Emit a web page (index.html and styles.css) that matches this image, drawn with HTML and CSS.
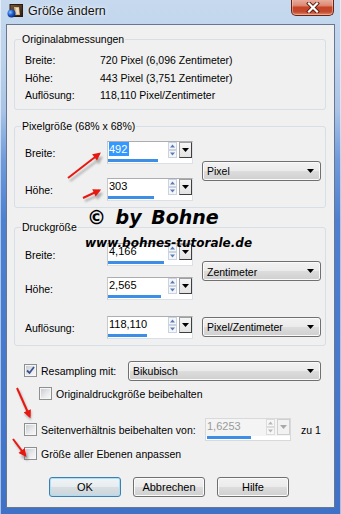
FILE: index.html
```html
<!DOCTYPE html>
<html lang="de">
<head>
<meta charset="utf-8">
<title>Größe ändern</title>
<link rel="stylesheet" href="styles.css">
</head>
<body>
<div class="window">
  <div class="titlebar">
    <svg class="app-icon" width="16" height="14" viewBox="0 0 16 14">
      <defs>
        <linearGradient id="ig" x1="0" y1="0" x2="1" y2="1">
          <stop offset="0" stop-color="#7a5a3c"/>
          <stop offset="1" stop-color="#2b1c12"/>
        </linearGradient>
        <radialGradient id="ball" cx="0.35" cy="0.35" r="0.7">
          <stop offset="0" stop-color="#8fc0ff"/>
          <stop offset="0.5" stop-color="#1f5fd0"/>
          <stop offset="1" stop-color="#0a2a70"/>
        </radialGradient>
      </defs>
      <rect x="3" y="0.5" width="12.5" height="12" fill="url(#ig)" stroke="#2a1a10" stroke-width="1"/>
      <path d="M7 3 L12 3 L13 11 L8 11 Z" fill="#d9b88a"/>
      <path d="M9 4 L11.5 4 L12 10 L9.5 10 Z" fill="#f1dfc0"/>
      <circle cx="4.5" cy="9.5" r="4" fill="url(#ball)"/>
    </svg>
    <span class="title">Größe ändern</span>
    <button class="close" type="button" aria-label="Schließen">
      <svg width="14" height="11" viewBox="0 0 14 11">
        <path d="M3 1.5 L11 9.5 M11 1.5 L3 9.5" stroke="#5a1a0e" stroke-width="4" stroke-linecap="square"/>
        <path d="M3 1.5 L11 9.5 M11 1.5 L3 9.5" stroke="#ffffff" stroke-width="2.2" stroke-linecap="square"/>
      </svg>
    </button>
  </div>

  <div class="client">
    <fieldset class="group g1">
      <legend>Originalabmessungen</legend>
      <div class="info-row"><span class="info-lbl">Breite:</span><span>720 Pixel (6,096 Zentimeter)</span></div>
      <div class="info-row"><span class="info-lbl">Höhe:</span><span>443 Pixel (3,751 Zentimeter)</span></div>
      <div class="info-row"><span class="info-lbl">Auflösung:</span><span>118,110 Pixel/Zentimeter</span></div>
    </fieldset>

    <fieldset class="group g2">
      <legend>Pixelgröße (68% x 68%)</legend>
      <div class="form-grid grid-px">
        <span class="lbl row-a">Breite:</span>
        <div class="spin row-a">
          <div class="spin-top">
            <span class="spin-val"><span class="sel">492</span></span>
            <span class="spin-arrows"><svg width="9" height="16" viewBox="0 0 9 16"><rect x="0.5" y="0.5" width="8" height="7" fill="#f4f6fa" stroke="#c9d3e2"/><path d="M2 5.5 L4.5 2.5 L7 5.5 Z" fill="#5c7cb4"/><rect x="0.5" y="8.5" width="8" height="7" fill="#f4f6fa" stroke="#c9d3e2"/><path d="M2 10.5 L4.5 13.5 L7 10.5 Z" fill="#5c7cb4"/></svg></span>
            <span class="spin-drop"><svg width="7" height="4" viewBox="0 0 7 4"><path d="M0 0 L7 0 L3.5 4 Z" fill="#000"/></svg></span>
          </div>
          <div class="spin-bar"><div class="spin-fill" style="width:50px"></div></div>
        </div>
        <div class="select row-ab"><span>Pixel</span><svg width="7" height="4" viewBox="0 0 7 4"><path d="M0 0 L7 0 L3.5 4 Z" fill="#000"/></svg></div>
        <span class="lbl row-b">Höhe:</span>
        <div class="spin row-b">
          <div class="spin-top">
            <span class="spin-val">303</span>
            <span class="spin-arrows"><svg width="9" height="16" viewBox="0 0 9 16"><rect x="0.5" y="0.5" width="8" height="7" fill="#f4f6fa" stroke="#c9d3e2"/><path d="M2 5.5 L4.5 2.5 L7 5.5 Z" fill="#5c7cb4"/><rect x="0.5" y="8.5" width="8" height="7" fill="#f4f6fa" stroke="#c9d3e2"/><path d="M2 10.5 L4.5 13.5 L7 10.5 Z" fill="#5c7cb4"/></svg></span>
            <span class="spin-drop"><svg width="7" height="4" viewBox="0 0 7 4"><path d="M0 0 L7 0 L3.5 4 Z" fill="#000"/></svg></span>
          </div>
          <div class="spin-bar"><div class="spin-fill" style="width:46px"></div></div>
        </div>
      </div>
    </fieldset>

    <fieldset class="group g3">
      <legend>Druckgröße</legend>
      <div class="form-grid grid-print">
        <span class="lbl row-a">Breite:</span>
        <div class="spin row-a">
          <div class="spin-top">
            <span class="spin-val">4,166</span>
            <span class="spin-arrows"><svg width="9" height="16" viewBox="0 0 9 16"><rect x="0.5" y="0.5" width="8" height="7" fill="#f4f6fa" stroke="#c9d3e2"/><path d="M2 5.5 L4.5 2.5 L7 5.5 Z" fill="#5c7cb4"/><rect x="0.5" y="8.5" width="8" height="7" fill="#f4f6fa" stroke="#c9d3e2"/><path d="M2 10.5 L4.5 13.5 L7 10.5 Z" fill="#5c7cb4"/></svg></span>
            <span class="spin-drop"><svg width="7" height="4" viewBox="0 0 7 4"><path d="M0 0 L7 0 L3.5 4 Z" fill="#000"/></svg></span>
          </div>
          <div class="spin-bar"><div class="spin-fill" style="width:56px"></div></div>
        </div>
        <div class="select row-ab"><span>Zentimeter</span><svg width="7" height="4" viewBox="0 0 7 4"><path d="M0 0 L7 0 L3.5 4 Z" fill="#000"/></svg></div>
        <span class="lbl row-b">Höhe:</span>
        <div class="spin row-b">
          <div class="spin-top">
            <span class="spin-val">2,565</span>
            <span class="spin-arrows"><svg width="9" height="16" viewBox="0 0 9 16"><rect x="0.5" y="0.5" width="8" height="7" fill="#f4f6fa" stroke="#c9d3e2"/><path d="M2 5.5 L4.5 2.5 L7 5.5 Z" fill="#5c7cb4"/><rect x="0.5" y="8.5" width="8" height="7" fill="#f4f6fa" stroke="#c9d3e2"/><path d="M2 10.5 L4.5 13.5 L7 10.5 Z" fill="#5c7cb4"/></svg></span>
            <span class="spin-drop"><svg width="7" height="4" viewBox="0 0 7 4"><path d="M0 0 L7 0 L3.5 4 Z" fill="#000"/></svg></span>
          </div>
          <div class="spin-bar"><div class="spin-fill" style="width:53px"></div></div>
        </div>
        <span class="lbl row-c">Auflösung:</span>
        <div class="spin row-c">
          <div class="spin-top">
            <span class="spin-val">118,110</span>
            <span class="spin-arrows"><svg width="9" height="16" viewBox="0 0 9 16"><rect x="0.5" y="0.5" width="8" height="7" fill="#f4f6fa" stroke="#c9d3e2"/><path d="M2 5.5 L4.5 2.5 L7 5.5 Z" fill="#5c7cb4"/><rect x="0.5" y="8.5" width="8" height="7" fill="#f4f6fa" stroke="#c9d3e2"/><path d="M2 10.5 L4.5 13.5 L7 10.5 Z" fill="#5c7cb4"/></svg></span>
            <span class="spin-drop"><svg width="7" height="4" viewBox="0 0 7 4"><path d="M0 0 L7 0 L3.5 4 Z" fill="#000"/></svg></span>
          </div>
          <div class="spin-bar"><div class="spin-fill" style="width:39px"></div></div>
        </div>
        <div class="select row-c"><span>Pixel/Zentimeter</span><svg width="7" height="4" viewBox="0 0 7 4"><path d="M0 0 L7 0 L3.5 4 Z" fill="#000"/></svg></div>
      </div>
    </fieldset>

    <div class="options">
      <div class="opt opt-resample">
        <span class="cb checked"><svg width="9" height="9" viewBox="0 0 9 9"><path d="M1 4.5 L3.5 7 L8 1" fill="none" stroke="#3b5390" stroke-width="1.8"/></svg></span>
        <span class="opt-lbl w-resample">Resampling mit:</span>
        <div class="select sel-wide"><span>Bikubisch</span><svg width="7" height="4" viewBox="0 0 7 4"><path d="M0 0 L7 0 L3.5 4 Z" fill="#000"/></svg></div>
      </div>
      <div class="opt opt-indent">
        <span class="cb"></span>
        <span class="opt-lbl">Originaldruckgröße beibehalten</span>
      </div>
      <div class="opt opt-ratio">
        <span class="cb"></span>
        <span class="opt-lbl w-ratio">Seitenverhältnis beibehalten von:</span>
        <div class="spin disabled">
          <div class="spin-top">
            <span class="spin-val">1,6253</span>
            <span class="spin-arrows"><svg width="9" height="16" viewBox="0 0 9 16"><rect x="0.5" y="0.5" width="8" height="7" fill="#f7f7f7" stroke="#dcdcdc"/><path d="M2 5.5 L4.5 2.5 L7 5.5 Z" fill="#b8b8b8"/><rect x="0.5" y="8.5" width="8" height="7" fill="#f7f7f7" stroke="#dcdcdc"/><path d="M2 10.5 L4.5 13.5 L7 10.5 Z" fill="#b8b8b8"/></svg></span>
            <span class="spin-drop"><svg width="7" height="4" viewBox="0 0 7 4"><path d="M0 0 L7 0 L3.5 4 Z" fill="#a8a8a8"/></svg></span>
          </div>
          <div class="spin-bar"><div class="spin-fill" style="width:44px"></div></div>
        </div>
        <span class="zu">zu 1</span>
      </div>
      <div class="opt opt-layers">
        <span class="cb"></span>
        <span class="opt-lbl">Größe aller Ebenen anpassen</span>
      </div>
    </div>

    <div class="buttons">
      <button class="btn default" type="button">OK</button>
      <button class="btn" type="button">Abbrechen</button>
      <button class="btn" type="button">Hilfe</button>
    </div>
  </div>

  <div class="watermark wm-name">© by Bohne</div>
  <div class="watermark wm-url">www.bohnes-tutorale.de</div>

  <svg class="arrows" width="341" height="514" viewBox="0 0 341 514">
    <defs>
      <marker id="head" viewBox="0 0 10 10" refX="7" refY="5" markerWidth="4.5" markerHeight="4" orient="auto" markerUnits="strokeWidth">
        <path d="M0 0 L10 5 L0 10 Z" fill="#e8170f"/>
      </marker>
      <marker id="headsh" viewBox="0 0 10 10" refX="7" refY="5" markerWidth="4.5" markerHeight="4" orient="auto" markerUnits="strokeWidth">
        <path d="M0 0 L10 5 L0 10 Z" fill="#777"/>
      </marker>
      <filter id="blur" x="-20%" y="-20%" width="140%" height="140%"><feGaussianBlur stdDeviation="1.2"/></filter>
    </defs>
    <g filter="url(#blur)" opacity="0.55" stroke="#777" stroke-width="2" marker-end="url(#headsh)">
      <line x1="70" y1="181" x2="101" y2="158"/>
      <line x1="85" y1="201" x2="101" y2="194"/>
      <line x1="19" y1="391" x2="30" y2="418"/>
      <line x1="15" y1="442" x2="27" y2="459"/>
    </g>
    <g stroke="#e8170f" stroke-width="2" marker-end="url(#head)">
      <line x1="68" y1="178" x2="99" y2="154"/>
      <line x1="83" y1="198" x2="99" y2="190.5"/>
      <line x1="17" y1="388" x2="29.5" y2="416"/>
      <line x1="13" y1="439" x2="25" y2="455"/>
    </g>
  </svg>
</div>
</body>
</html>
```

FILE: styles.css
```css
* { box-sizing: border-box; }

html, body {
  margin: 0;
  padding: 0;
}

body {
  width: 341px;
  height: 514px;
  overflow: hidden;
  font-family: "Liberation Sans", Arial, sans-serif;
  font-size: 10.5px;
  color: #000;
}

.window {
  position: relative;
  width: 341px;
  height: 514px;
  padding: 0 6px 6px 6px;
  background: linear-gradient(180deg, #c6d9ee 0px, #bcd2ec 60px, #a9c4e7 110px, #6f9bdb 160px, #4d80d1 220px, #3f72c7 514px);
  box-shadow: inset 1px 0 0 rgba(255,255,255,0.55), inset -1px 0 0 rgba(255,255,255,0.55);
}

/* ---------- title bar ---------- */
.titlebar {
  display: flex;
  align-items: flex-start;
  height: 24px;
}

.app-icon {
  margin: 4px 0 0 1px;
  flex: none;
}

.title {
  margin: 4px 0 0 5px;
  font-size: 12.5px;
  line-height: 15px;
  color: #111;
  text-shadow: 0 0 6px rgba(255,255,255,0.95), 0 0 2px rgba(255,255,255,0.9);
}

.close {
  margin: -1px 1px 0 auto;
  width: 43px;
  height: 17px;
  padding: 0;
  border: 1px solid #6a2212;
  border-top: none;
  border-radius: 0 0 5px 5px;
  background: linear-gradient(180deg, #eab1a3 0%, #dc8a75 40%, #c84426 52%, #c24a2e 80%, #dd8a6e 100%);
  box-shadow: inset 0 0 0 1px rgba(255,220,200,0.45);
  display: flex;
  align-items: center;
  justify-content: center;
}

/* ---------- client area ---------- */
.client {
  height: 484px;
  background: #f0f0f0;
  border: 1px solid #66788f;
  padding-top: 8px;
}

.group {
  margin: 0 8px 0 7px;
  min-width: 0;
  border: 1px solid #d5dfe5;
  border-radius: 3px;
  padding: 6px 3px 4px 6px;
}

.group legend {
  padding: 0 1px;
  line-height: 13px;
}

.g2 { margin-top: 10px; padding-top: 8px; padding-bottom: 6px; }
.g3 { margin-top: 13px; padding-top: 9px; padding-bottom: 6px; }

.info-row {
  display: flex;
  height: 17.5px;
  line-height: 17.5px;
  padding-left: 4px;
}

.info-lbl { width: 75px; }

/* ---------- form grid ---------- */
.form-grid {
  display: grid;
  grid-template-columns: 82px 95px 119px;
  padding-left: 4px;
}

.grid-px { grid-template-rows: 23px 14px 23px; }
.grid-print { grid-template-rows: 23px 11px 23px 16px 23px; }

.lbl {
  grid-column: 1;
  line-height: 23px;
  padding-top: 1px;
}

.spin { grid-column: 2; }
.select.row-ab, .select.row-c { grid-column: 3; }

.row-a { grid-row: 1; }
.row-b { grid-row: 3; }
.row-c { grid-row: 5; }
.row-ab { grid-row: 1 / 4; align-self: center; }
.select.row-c { align-self: center; margin-top: -1px; }

/* ---------- spin edit ---------- */
.spin {
  width: 86px;
  height: 23px;
  background: #fff;
  border: 1px solid #dbdfe6;
  border-top-color: #abadb3;
  border-left-color: #c5c9d0;
  display: flex;
  flex-direction: column;
}

.spin-top {
  display: flex;
  height: 17px;
}

.spin-val {
  flex: 1;
  font-size: 11px;
  line-height: 14px;
  padding-left: 1px;
  white-space: nowrap;
}

.sel {
  display: inline-block;
  background: #3399ff;
  color: #fff;
  padding-right: 2px;
}

.spin-arrows {
  width: 10px;
  padding-top: 0;
  display: flex;
}

.spin-drop {
  width: 13px;
  height: 16px;
  margin-left: 1px;
  border: 1px solid #3f3f3f;
  border-left-color: #a0a0a0;
  border-top-color: #a0a0a0;
  background: linear-gradient(180deg, #f5f5f5, #e3e3e3);
  display: flex;
  align-items: center;
  justify-content: center;
}

.spin-bar {
  height: 4px;
  margin-top: 1px;
}

.spin-fill {
  height: 3px;
  background: #3c8fe4;
}

.spin.disabled {
  width: 86px;
  border-color: #d9d9d9;
  background: #f4f4f4;
}

.spin.disabled .spin-top { background: #f4f4f4; }
.spin.disabled .spin-val { color: #9a9a9a; }
.spin.disabled .spin-drop {
  border-color: #cfcfcf;
  background: #f2f2f2;
}
.spin.disabled .spin-bar { background: #fff; }
.spin.disabled .spin-fill { margin-left: 1px; }

/* ---------- select ---------- */
.select {
  height: 20px;
  border: 1px solid #707070;
  border-radius: 3px;
  padding: 0 6px 0 4px;
  display: flex;
  align-items: center;
  justify-content: space-between;
  background: linear-gradient(180deg, #f2f2f2 0%, #ebebeb 50%, #dddddd 50%, #cfcfcf 100%);
  box-shadow: inset 0 0 0 1px #fafafa;
}

.select span { padding-top: 1px; }

/* ---------- options ---------- */
.options {
  padding-left: 17px;
  margin-top: 15px;
}

.opt {
  display: flex;
  align-items: center;
}

.opt-resample { height: 20px; }
.opt-indent { height: 16px; margin-top: 5px; padding-left: 15px; }
.opt-ratio { height: 22px; margin-top: 17px; }
.opt-layers { height: 16px; margin-top: 5px; }

.cb {
  flex: none;
  width: 13px;
  height: 13px;
  border: 1px solid #8e8f8f;
  padding: 1px;
  background: linear-gradient(135deg, #c9cdd3 0%, #e9eaec 60%, #f7f7f7 100%) content-box, #f6f6f6;
  display: flex;
}

.checked svg { display: block; }

.opt-lbl {
  margin-left: 4px;
  padding-top: 1px;
}

.w-resample { width: 87px; flex: none; }
.w-ratio { width: 164px; flex: none; }

.sel-wide { width: 193px; }

.zu {
  margin-left: 10px;
  padding-top: 1px;
}

/* ---------- buttons ---------- */
.buttons {
  display: flex;
  gap: 12px;
  padding-left: 42px;
  margin-top: 15px;
}

.btn {
  width: 72px;
  height: 20px;
  padding: 0;
  border: 1px solid #707070;
  border-radius: 3px;
  font-family: "Liberation Sans", Arial, sans-serif;
  font-size: 11px;
  color: #000;
  background: linear-gradient(180deg, #f2f2f2 0%, #ebebeb 50%, #dddddd 50%, #cfcfcf 100%);
  box-shadow: inset 0 0 0 1px #fbfbfb;
}

.btn.default {
  border-color: #3c7fb1;
  background: linear-gradient(180deg, #f0f4f7 0%, #e7ecef 50%, #d8dfe3 50%, #cdd5da 100%);
  box-shadow: inset 0 0 0 1px #a9e0f7;
}

/* ---------- overlays ---------- */
.watermark {
  position: absolute;
  font-family: "DejaVu Sans", sans-serif;
  font-weight: bold;
  font-style: italic;
  color: #000;
  white-space: nowrap;
}

.wm-name {
  left: 87px;
  top: 206px;
  font-size: 19px;
  line-height: 22px;
  word-spacing: 3px;
}

.wm-url {
  left: 85px;
  top: 236px;
  font-size: 12px;
  line-height: 14px;
}

.arrows {
  position: absolute;
  left: 0;
  top: 0;
  pointer-events: none;
}
```
